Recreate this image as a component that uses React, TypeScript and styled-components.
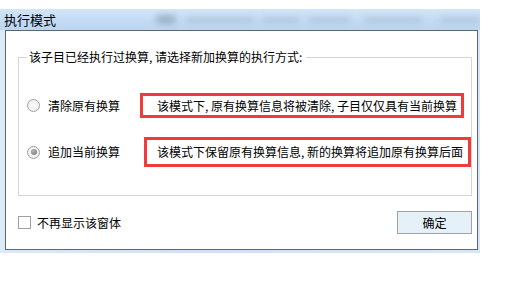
import React from "react";
import styled, { createGlobalStyle } from "styled-components";

const Global = createGlobalStyle`
  html, body { margin: 0; padding: 0; background: #ffffff; }
  body { font-family: "Noto Sans CJK SC", "Noto Sans", sans-serif; font-size: 12px; color: #000; }
  * { box-sizing: border-box; }
`;

const Window = styled.div`
  margin-top: 9px;
  width: 480px;
  display: flex;
  flex-direction: column;
  padding: 0 2px 3px 5px;
  background: linear-gradient(90deg, #dce9f6 0%, #cfe1f3 40%, #d6e6f6 100%);
`;

const TitleBar = styled.div`
  height: 21px;
  margin-left: -5px;
  margin-right: -2px;
  display: flex;
  align-items: center;
  overflow: hidden;
  background: linear-gradient(180deg, #d3e5f7 0%, #c3dbf3 55%, #bcd6f0 100%);
`;

const Title = styled.span`
  margin-left: 4px;
  font-size: 13px;
  line-height: 16px;
  color: #000;
`;

const Ghost = styled.span<{ $ml: number; $w: number; $dark?: boolean }>`
  margin-left: ${(p) => p.$ml}px;
  width: ${(p) => p.$w}px;
  height: ${(p) => (p.$dark ? 9 : 6)}px;
  flex: none;
  border-radius: 4px;
  background: ${(p) => (p.$dark ? "#6d7f92" : "#8ea0b3")};
  opacity: ${(p) => (p.$dark ? 0.45 : 0.35)};
  filter: blur(3px);
`;

const Body = styled.div`
  background: #ffffff;
  border: 1px solid #5d6673;
  display: flex;
  flex-direction: column;
`;

const Group = styled.fieldset`
  margin: 18px 5px 0 12px;
  padding: 28px 8px 28px 8px;
  border: 1px solid #d5d5d5;
  display: flex;
  flex-direction: column;
  gap: 19px;
  min-width: 0;
`;

const Legend = styled.legend`
  padding: 0 4px 0 2px;
  font-size: 12px;
  line-height: 16px;
  color: #000;
`;

const Row = styled.div`
  display: flex;
  align-items: center;
`;

const Radio = styled.span<{ $checked?: boolean }>`
  width: 13px;
  height: 13px;
  flex: none;
  border-radius: 50%;
  border: 1px solid #a2a2a2;
  background: radial-gradient(circle at 50% 50%, #ffffff 0%, #f2f2f2 60%, #e4e4e4 100%);
  display: flex;
  align-items: center;
  justify-content: center;
  &::after {
    content: "";
    display: ${(p) => (p.$checked ? "block" : "none")};
    width: 6px;
    height: 6px;
    border-radius: 50%;
    background: radial-gradient(circle at 40% 35%, #b8b8b8 0%, #8a8a8a 60%, #7a7a7a 100%);
  }
`;

const Label = styled.span`
  margin-left: 8px;
  width: 72px;
  flex: none;
  font-size: 12px;
  line-height: 16px;
  white-space: nowrap;
`;

const Note = styled.div<{ $ml: number; $w: number; $h: number; $pl: number }>`
  margin-left: ${(p) => p.$ml}px;
  width: ${(p) => p.$w}px;
  height: ${(p) => p.$h}px;
  padding-left: ${(p) => p.$pl}px;
  flex: none;
  border: 3px solid #f23a3a;
  display: flex;
  align-items: center;
  font-size: 12px;
  line-height: 16px;
  white-space: nowrap;
  overflow: hidden;
`;

const Footer = styled.div`
  margin-top: 15px;
  padding: 0 5px 15px 12px;
  display: flex;
  align-items: center;
`;

const Check = styled.span`
  width: 13px;
  height: 13px;
  flex: none;
  border: 1px solid #a0a0a0;
  background: #ffffff;
`;

const CheckLabel = styled.span`
  margin-left: 6px;
  font-size: 12px;
  line-height: 16px;
`;

const Button = styled.button`
  margin-left: auto;
  width: 75px;
  height: 23px;
  padding: 0;
  border: 1px solid #a2a2a2;
  background: #e4f1f8;
  font-family: "Noto Sans CJK SC", "Noto Sans", sans-serif;
  font-size: 12px;
  line-height: 16px;
  color: #000;
`;

export default function App() {
  return (
    <>
      <Global />
      <Window>
        <TitleBar>
          <Title>执行模式</Title>
          <Ghost $ml={100} $w={20} $dark />
          <Ghost $ml={10} $w={68} />
          <Ghost $ml={8} $w={38} />
          <Ghost $ml={8} $w={42} />
          <Ghost $ml={14} $w={58} />
          <Ghost $ml={18} $w={40} />
        </TitleBar>
        <Body>
          <Group>
            <Legend>该子目已经执行过换算, 请选择新加换算的执行方式:</Legend>
            <Row>
              <Radio />
              <Label>清除原有换算</Label>
              <Note $ml={20} $w={324} $h={25} $pl={14}>
                该模式下, 原有换算信息将被清除, 子目仅仅具有当前换算
              </Note>
            </Row>
            <Row>
              <Radio $checked />
              <Label>追加当前换算</Label>
              <Note $ml={24} $w={327} $h={30} $pl={10}>
                该模式下保留原有换算信息, 新的换算将追加原有换算后面
              </Note>
            </Row>
          </Group>
          <Footer>
            <Check />
            <CheckLabel>不再显示该窗体</CheckLabel>
            <Button>确定</Button>
          </Footer>
        </Body>
      </Window>
    </>
  );
}
